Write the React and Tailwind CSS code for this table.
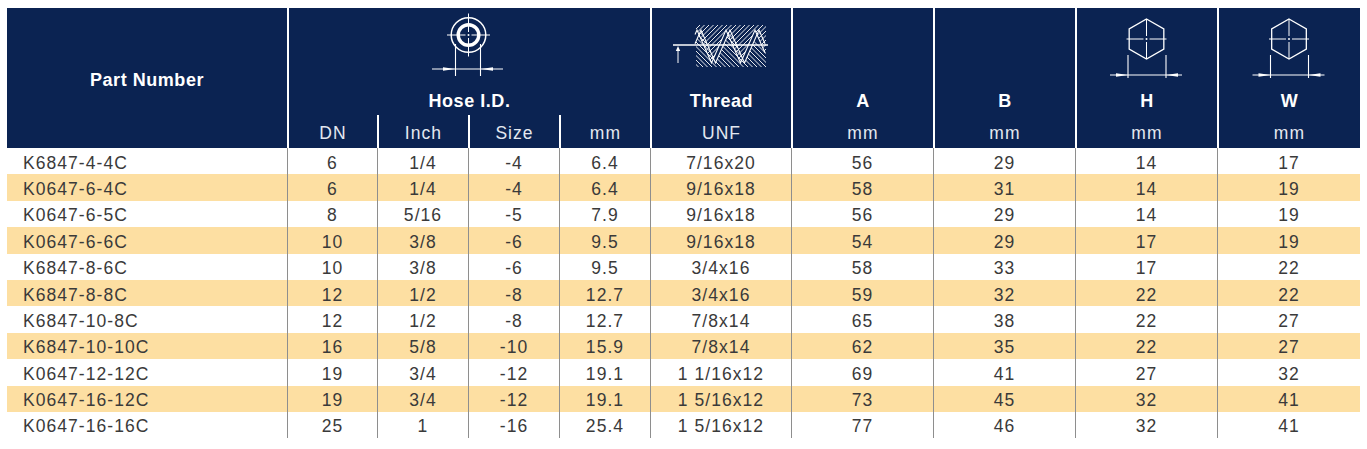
import React from "react";

const rows = [
  ["K6847-4-4C", "6", "1/4", "-4", "6.4", "7/16x20", "56", "29", "14", "17"],
  ["K0647-6-4C", "6", "1/4", "-4", "6.4", "9/16x18", "58", "31", "14", "19"],
  ["K0647-6-5C", "8", "5/16", "-5", "7.9", "9/16x18", "56", "29", "14", "19"],
  ["K0647-6-6C", "10", "3/8", "-6", "9.5", "9/16x18", "54", "29", "17", "19"],
  ["K6847-8-6C", "10", "3/8", "-6", "9.5", "3/4x16", "58", "33", "17", "22"],
  ["K6847-8-8C", "12", "1/2", "-8", "12.7", "3/4x16", "59", "32", "22", "22"],
  ["K6847-10-8C", "12", "1/2", "-8", "12.7", "7/8x14", "65", "38", "22", "27"],
  ["K6847-10-10C", "16", "5/8", "-10", "15.9", "7/8x14", "62", "35", "22", "27"],
  ["K0647-12-12C", "19", "3/4", "-12", "19.1", "1 1/16x12", "69", "41", "27", "32"],
  ["K0647-16-12C", "19", "3/4", "-12", "19.1", "1 5/16x12", "73", "45", "32", "41"],
  ["K0647-16-16C", "25", "1", "-16", "25.4", "1 5/16x12", "77", "46", "32", "41"],
];

const widths = ["w-[90px]", "w-[91px]", "w-[91px]", "w-[91px]", "w-[141px]", "w-[142px]", "w-[142px]", "w-[142px]", "w-[143px]"];

function HoseIcon() {
  const cx = 468.5;
  const cy = 35;
  return (
    <svg width="361" height="77" viewBox="289 8 361 77" className="block">
      <g stroke="white" fill="none">
        <circle cx={cx} cy={cy} r="17.3" strokeWidth="1.5" />
        <circle cx={cx} cy={cy} r="10.3" strokeWidth="3.4" />
        <line x1={cx - 21.5} y1={cy} x2={cx - 3} y2={cy} strokeWidth="1" />
        <line x1={cx + 3} y1={cy} x2={cx + 21.5} y2={cy} strokeWidth="1" />
        <line x1={cx} y1={cy - 21.5} x2={cx} y2={cy - 3} strokeWidth="1" />
        <line x1={cx} y1={cy + 3} x2={cx} y2={cy + 21.5} strokeWidth="1" />
        <line x1="455.5" y1="44" x2="455.5" y2="76" strokeWidth="1.1" />
        <line x1="480.5" y1="44" x2="480.5" y2="76" strokeWidth="1.1" />
        <line x1="432" y1="69" x2="503" y2="69" strokeWidth="1.1" />
      </g>
      <circle cx={cx} cy={cy} r="1" fill="white" />
      <polygon points="455,69 443,67.3 443,70.7" fill="white" />
      <polygon points="481,69 493,67.3 493,70.7" fill="white" />
    </svg>
  );
}

function ThreadIcon() {
  const up = [];
  const down = [];
  for (let x = 640; x <= 780; x += 4.5) {
    up.push(<line key={"u" + x} x1={x} y1="67" x2={x + 42} y2="25" />);
    down.push(<line key={"d" + x} x1={x - 42} y1="25" x2={x} y2="67" />);
  }
  const z1 = "695,34.5 697,30 711.5,63 726,30 740.5,63 755,30 765,52.8";
  const z2 = "695,43.7 701,30 715.5,63 730,30 744.5,63 759,30 765,43.7";
  return (
    <svg width="139" height="77" viewBox="652 8 139 77" className="block">
      <defs>
        <clipPath id="thrUp">
          <polygon points={"696,25 766,25 766,52.8 765,52.8 755,30 740.5,63 726,30 711.5,63 697,30 696,32.3"} />
        </clipPath>
        <clipPath id="thrDown">
          <polygon points={"696,67 766,67 766,43.7 765,43.7 759,30 744.5,63 730,30 715.5,63 701,30 696,41.4"} />
        </clipPath>
      </defs>
      <g stroke="white" strokeWidth="0.9" clipPath="url(#thrUp)">{up}</g>
      <g stroke="white" strokeWidth="0.9" clipPath="url(#thrDown)">{down}</g>
      <polyline points={z1} stroke="white" strokeWidth="1.1" fill="none" />
      <polyline points={z2} stroke="white" strokeWidth="1.1" fill="none" />
      <line x1="673" y1="45" x2="768" y2="45" stroke="white" strokeWidth="1.3" />
      <line x1="678" y1="49" x2="678" y2="63" stroke="white" strokeWidth="1" />
      <polygon points="678,46 675.8,51 680.2,51" fill="white" />
    </svg>
  );
}

function HexIcon({ x0, w, cx }) {
  const cy = 39;
  const R = 20;
  const dx = R * 0.866;
  const pts = [
    [cx, cy - R],
    [cx + dx, cy - R / 2],
    [cx + dx, cy + R / 2],
    [cx, cy + R],
    [cx - dx, cy + R / 2],
    [cx - dx, cy - R / 2],
  ]
    .map((p) => p.join(","))
    .join(" ");
  const l = cx - 18.5;
  const r = cx + 19.5;
  return (
    <svg width={w} height="77" viewBox={`${x0} 8 ${w} 77`} className="block">
      <g stroke="white" fill="none">
        <polygon points={pts} strokeWidth="1.3" />
        <line x1={cx - 20} y1={cy} x2={cx - 3} y2={cy} strokeWidth="1" />
        <line x1={cx + 3} y1={cy} x2={cx + 20} y2={cy} strokeWidth="1" />
        <line x1={cx} y1={cy - R} x2={cx} y2={cy - 3} strokeWidth="1" />
        <line x1={cx} y1={cy + 3} x2={cx} y2={cy + R} strokeWidth="1" />
        <line x1={l} y1="55" x2={l} y2="78" strokeWidth="1.1" />
        <line x1={r} y1="55" x2={r} y2="78" strokeWidth="1.1" />
        <line x1={cx - 36.5} y1="75" x2={cx + 35.5} y2="75" strokeWidth="1.1" />
      </g>
      <circle cx={cx} cy={cy} r="1" fill="white" />
      <polygon points={`${l},75 ${l - 12},73.3 ${l - 12},76.7`} fill="white" />
      <polygon points={`${r},75 ${r + 12},73.3 ${r + 12},76.7`} fill="white" />
    </svg>
  );
}

function HeadCol({ width, icon, label, unit }) {
  return (
    <div className={`${width} border-l-2 border-white flex flex-col`}>
      <div className="h-[77px]">{icon}</div>
      <div className="h-[30px] pt-[2px] flex items-center justify-center font-bold text-[18px] tracking-[0.03em] text-white">
        {label}
      </div>
      <div className="h-[33px] pt-[3px] flex items-center justify-center text-[17.5px] tracking-[0.06em] text-[#e4e8f0]">
        {unit}
      </div>
    </div>
  );
}

export default function App() {
  return (
    <div className="w-[1367px] h-[449px] bg-white font-['Liberation_Sans',Arial,Helvetica,sans-serif]">
      <div className="pt-[8px] pl-[7px]">
        <div className="w-[1353px]">
          {/* Header */}
          <div className="flex h-[140px] bg-[#0b2352] text-white">
            <div className="w-[280px] pt-[4px] flex items-center justify-center font-bold text-[18px] tracking-[0.03em]">
              Part Number
            </div>
            <div className="w-[363px] border-l-2 border-white flex flex-col">
              <div className="h-[77px]">
                <HoseIcon />
              </div>
              <div className="h-[30px] pt-[2px] flex items-center justify-center font-bold text-[18px] tracking-[0.03em]">
                Hose I.D.
              </div>
              <div className="h-[33px] pt-[3px] flex text-[17.5px] tracking-[0.06em] text-[#e4e8f0]">
                <div className="w-[88px] flex items-center justify-center">DN</div>
                <div className="w-[91px] -mt-[3px] pt-[3px] border-l-2 border-white flex items-center justify-center">Inch</div>
                <div className="w-[91px] -mt-[3px] pt-[3px] border-l-2 border-white flex items-center justify-center">Size</div>
                <div className="w-[91px] -mt-[3px] pt-[3px] border-l-2 border-white flex items-center justify-center">mm</div>
              </div>
            </div>
            <HeadCol width="w-[141px]" icon={<ThreadIcon />} label="Thread" unit="UNF" />
            <HeadCol width="w-[142px]" icon={null} label="A" unit="mm" />
            <HeadCol width="w-[142px]" icon={null} label="B" unit="mm" />
            <HeadCol width="w-[142px]" icon={<HexIcon x0={1077} w={140} cx={1146.5} />} label="H" unit="mm" />
            <HeadCol width="w-[143px]" icon={<HexIcon x0={1219} w={141} cx={1289} />} label="W" unit="mm" />
          </div>
          {/* Body */}
          <div className="text-[17.5px] tracking-[0.06em] text-[#3a3a3a]">
            {rows.map((row, i) => (
              <div
                key={i}
                className={`flex h-[26.4px] ${i % 2 === 1 ? "bg-[#fddfa2]" : "bg-white"}`}
              >
                <div className="w-[280px] pl-[16px] pt-[3px] flex items-center">{row[0]}</div>
                {row.slice(1).map((v, j) => (
                  <div
                    key={j}
                    className={`${widths[j]} border-l border-[#8e8e8e] pt-[3px] flex items-center justify-center`}
                  >
                    {v}
                  </div>
                ))}
              </div>
            ))}
          </div>
        </div>
      </div>
    </div>
  );
}
